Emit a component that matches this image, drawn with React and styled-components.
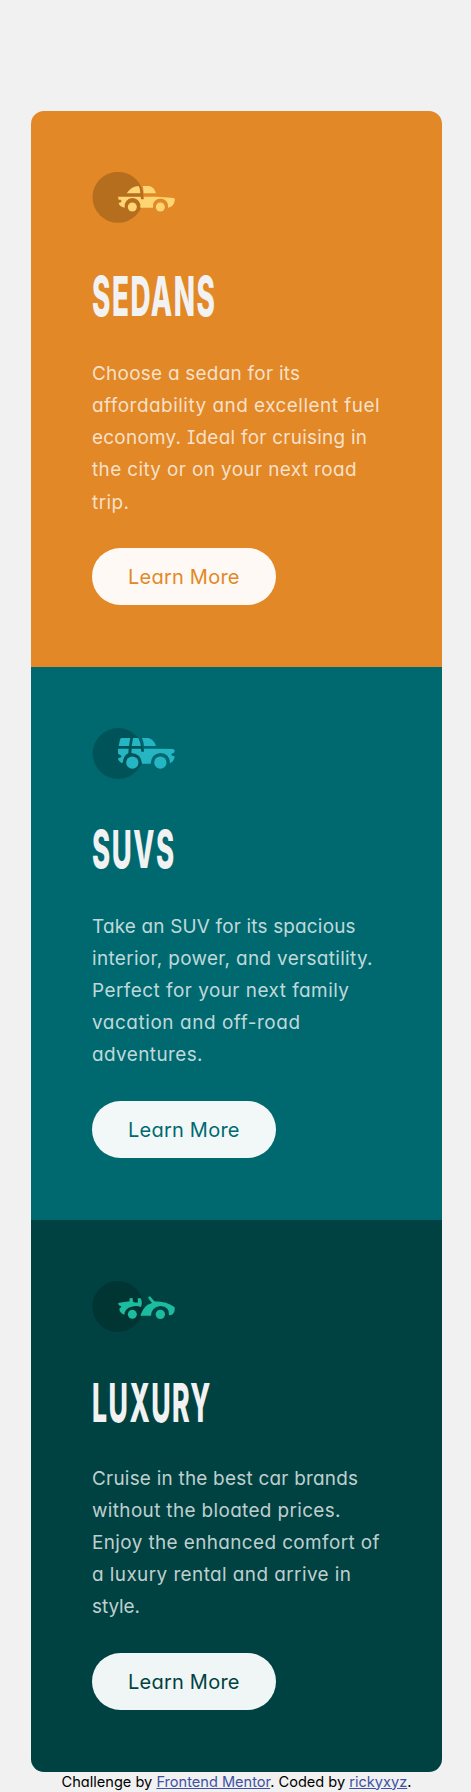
import React, { useLayoutEffect, useRef, useState } from "react";
import styled, { createGlobalStyle } from "styled-components";

const GlobalStyle = createGlobalStyle`
  * { box-sizing: border-box; }
  html, body { margin: 0; overflow: hidden; background: #f1f1f1; }
  body { font-family: Inter, "Open Sans", sans-serif; font-feature-settings: "cv11", "cv08", "liga" 0; }
`;

const Page = styled.main`
  height: 1792px;
  overflow: hidden;
  padding: 111px 29.5px 0 31px;
`;

const Cards = styled.div`
  border-radius: 13px;
  overflow: hidden;
`;

const Card = styled.section`
  display: flex;
  flex-direction: column;
  align-items: flex-start;
  padding: 61px 61px 61.5px;
  background: ${(p) => p.$color};
`;

const Icon = styled.svg`
  display: block;
  width: 84px;
  height: 51px;
`;

const Title = styled.h2`
  margin: ${(p) => p.$top}px 0 ${(p) => p.$bottom}px;
  color: #f2f2f2;
  font-size: ${(p) => p.$size}px;
  font-weight: 800;
  letter-spacing: 3px;
  line-height: 60px;
  height: 60px;
`;

const Stretch = styled.span`
  display: inline-block;
  transform-origin: left;
  white-space: nowrap;
`;

const Text = styled.p`
  margin: 0 0 29.4px;
  color: rgba(255, 255, 255, 0.76);
  font-size: 18.9px;
  line-height: 32.15px;
`;

const Line = styled.span`
  display: block;
  white-space: nowrap;
`;

const Spaced = styled.span`
  display: inline-block;
  white-space: nowrap;
`;

const Button = styled.button`
  display: flex;
  align-items: center;
  justify-content: center;
  width: 183.5px;
  height: 57px;
  padding: 1px 0 0;
  border: 0;
  border-radius: 29px;
  background: ${(p) => p.$fill};
  color: ${(p) => p.$color};
  font: inherit;
  font-size: 20px;
`;

const Footer = styled.footer`
  padding-left: 30.5px;
  font-size: 14.6px;
  line-height: 20px;
  color: #000;
`;

const Link = styled.a`
  color: #3e52a3;
  text-decoration: underline;
`;

/* Tracks the text out so that it fills the given width. */
function Tracked({ width, children }) {
  const ref = useRef(null);
  const [spacing, setSpacing] = useState(0);
  useLayoutEffect(() => {
    const el = ref.current;
    const count = el.textContent.length;
    setSpacing((width - el.getBoundingClientRect().width) / (count - 1));
  }, [width]);
  return <Spaced ref={ref} style={{ letterSpacing: spacing, marginRight: -spacing }}>{children}</Spaced>;
}

/* Condenses the text horizontally to the given width. */
function Condensed({ width, children }) {
  const ref = useRef(null);
  const [scale, setScale] = useState(1);
  useLayoutEffect(() => {
    setScale(width / ref.current.offsetWidth);
  }, [width]);
  return <Stretch ref={ref} style={{ transform: `scaleX(${scale})` }}>{children}</Stretch>;
}

const SedanIcon = () => (
  <Icon viewBox="216 216 252 153">
    <circle cx="294" cy="292" r="76.5" fill="#b56d1e" />
    <g fill="#ffd473">
      <path d="M320 280Q335 258 356 258Q361 266 361 280Z" />
      <path d="M368 258H387Q403 261 408 280H371Q371 267 368 258Z" />
      <path d="M294 290H361Q363 290 363 298H372L371 290H410L462 294Q466 297 464 303Q460 321 444 323A23 23 0 1 0 399 323H361A24 24 0 1 0 314 323Q298 320 296 309L303 307Q307 303 302 299H296Z" />
      <circle cx="337" cy="321" r="13.5" />
      <circle cx="421" cy="321" r="13.5" />
    </g>
  </Icon>
);

const SuvIcon = () => (
  <Icon viewBox="36 39 252 153">
    <circle cx="114.5" cy="115.5" r="76.5" fill="#005459" />
    <g fill="#25b5c3">
      <path d="M125 69H151L147 93H116L120 74Q121 69 125 69Z" />
      <path d="M159 69H175Q181 80 183 93H155Z" />
      <path d="M186 69H205Q222 73 228 93H192Q191 80 186 69Z" />
      <path d="M114 101H146L145 115Q131 121 128 143L125 144Q114 138 114 130L123 127Q127 123 122 121L114 116Z" />
      <path d="M155 101H183L184 110H192V101H230L280 102Q285 105 284 112L274 117Q273 122 284 124Q284 138 270 145Q269 115 241 114Q214 116 212 146H186Q184 116 154 114Z" />
      <circle cx="157" cy="143" r="18.5" />
      <circle cx="241" cy="143" r="18.5" />
    </g>
  </Icon>
);

const LuxuryIcon = () => (
  <Icon viewBox="36 31 252 153">
    <circle cx="113.5" cy="107.5" r="76.5" fill="#003534" />
    <g fill="#1cbca0">
      <path d="M116 102Q112 97 118 96L149 92L148 85Q151 80 158 83L159 93Q168 97 174 95L173 84Q177 80 183 84Q188 95 183 109Q170 104 155 108Q135 112 133 132Q118 126 118 114Q125 110 124 107Q118 106 116 102Z" />
      <path d="M181 135Q190 110 203 102L216 97L205 83Q204 77 210 77L223 92Q262 92 284 110Q286 120 279 130Q274 134 267 134Q270 108 241 106Q214 110 213 135Z" />
      <circle cx="157" cy="131" r="13.5" />
      <circle cx="241" cy="131" r="14" />
    </g>
  </Icon>
);

const cards = [
  {
    title: "SEDANS", width: 124.5, size: 55, top: 42.5, bottom: 32.4, color: "#e28826", fill: "#fff9f5", icon: SedanIcon,
    lines: [["Choose a sedan for its", 208], ["affordability and excellent fuel", 287.5], ["economy. Ideal for cruising in", 275], ["the city or on your next road", 264.5], ["trip.", 37]],
  },
  {
    title: "SUVS", width: 83.5, size: 52, top: 41, bottom: 31.3, color: "#00696f", fill: "#f2f8f8", icon: SuvIcon,
    lines: [["Take an SUV for its spacious", 263.5], ["interior, power, and versatility.", 280.5], ["Perfect for your next family", 257], ["vacation and off-road", 208], ["adventures.", 110.5]],
  },
  {
    title: "LUXURY", width: 120, size: 53.5, top: 41.5, bottom: 29.8, color: "#004241", fill: "#f0f5f6", icon: LuxuryIcon,
    lines: [["Cruise in the best car brands", 266], ["without the bloated prices.", 248.5], ["Enjoy the enhanced comfort of", 287.5], ["a luxury rental and arrive in", 259], ["style.", 48]],
  },
];

export default function App() {
  return (
    <>
      <GlobalStyle />
      <Page>
        <Cards>
          {cards.map(({ title, width, size, top, bottom, color, fill, icon: CarIcon, lines }) => (
            <Card key={title} $color={color}>
              <CarIcon />
              <Title $size={size} $top={top} $bottom={bottom}>
                <Condensed width={width}>{title}</Condensed>
              </Title>
              <Text>
                {lines.map(([text, w]) => (
                  <Line key={text}><Tracked width={w}>{text}</Tracked></Line>
                ))}
              </Text>
              <Button $fill={fill} $color={color}>
                <Tracked width={111.5}>Learn More</Tracked>
              </Button>
            </Card>
          ))}
        </Cards>
        <Footer>
          <Tracked width={350}>
            Challenge by <Link href="#">Frontend Mentor</Link>. Coded by <Link href="#">rickyxyz</Link>.
          </Tracked>
        </Footer>
      </Page>
    </>
  );
}
